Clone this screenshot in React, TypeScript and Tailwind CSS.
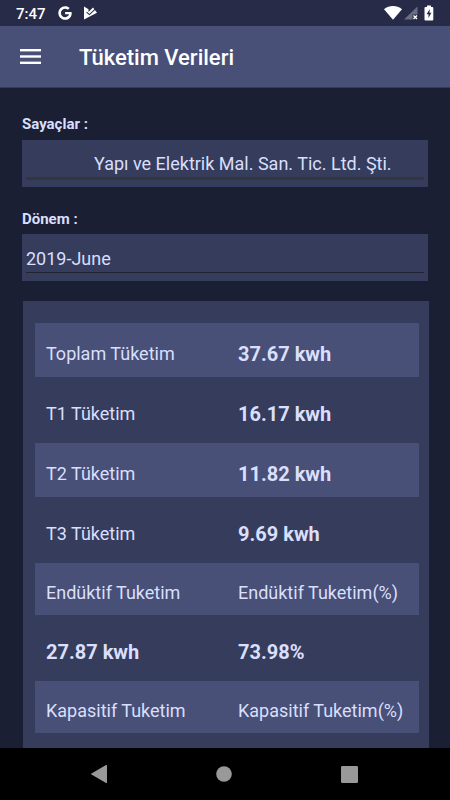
import React from 'react';
import { FaGoogle } from 'react-icons/fa';

interface ReadingRow {
  left: string;
  right: string;
  kind: 'reading' | 'header' | 'values';
}

const rows: ReadingRow[] = [
  { left: 'Toplam Tüketim', right: '37.67 kwh', kind: 'reading' },
  { left: 'T1 Tüketim', right: '16.17 kwh', kind: 'reading' },
  { left: 'T2 Tüketim', right: '11.82 kwh', kind: 'reading' },
  { left: 'T3 Tüketim', right: '9.69 kwh', kind: 'reading' },
  { left: 'Endüktif Tuketim', right: 'Endüktif Tuketim(%)', kind: 'header' },
  { left: '27.87 kwh', right: '73.98%', kind: 'values' },
  { left: 'Kapasitif Tuketim', right: 'Kapasitif Tuketim(%)', kind: 'header' }
];

function StatusBar() {
  return (
    <div className="flex h-[26px] shrink-0 items-center justify-between bg-[#282b48] px-4 text-white">
      <div className="flex items-center">
        <span className="w-[42px] pt-[2px] text-[15px] leading-5 font-medium">7:47</span>
        <FaGoogle className="h-[14px] w-[14px]" />
        {/* Play Protect style check flag */}
        <svg className="ml-3 h-[14px] w-[13px]" viewBox="0 0 13 14">
          <path d="M0 .6 4.500 3.200V6L9 1.500 10.500 3.500 13 6.800 0 13.500z" fill="#fff" />
          <path d="M2.600 6.200 5.400 8.600 11.200 3.200" fill="none" stroke="#282b48" strokeWidth="1.100" />
        </svg>
      </div>
      <div className="flex items-center">
        <svg className="h-[14px] w-[18px]" viewBox="0 0 18 14">
          <path d="M0 3.3C5-1 13-1 18 3.3L9 13.7z" fill="#fff" />
        </svg>
        <svg className="ml-[2px] h-[14px] w-[14px]" viewBox="0 0 14 14">
          <path d="M13.500 .5V8.500H8.500v5H0z" fill="#6b6d82" />
          <path d="M9.500 9.500l3.500 3.500M13 9.500L9.500 13" stroke="#fff" strokeWidth="1.400" />
        </svg>
        <svg className="ml-[6px] h-[16px] w-[10px]" viewBox="0 0 10 16">
          <path d="M3 .5h4V2h1.3q1 0 1 1v11.500q0 1-1 1H1.500q-1 0-1-1V3q0-1 1-1H3z" fill="#fff" />
          <path d="M5.700 4 2.600 9.200H4.500V13L7.400 7.800H5.500z" fill="#282b48" />
        </svg>
      </div>
    </div>
  );
}

function AppBar() {
  return (
    <header className="flex h-[62px] shrink-0 items-center border-b border-[#32395a] bg-[#485078] pl-5 text-white">
      <button type="button" aria-label="Menü" className="mr-[38px]">
        <svg className="h-[15px] w-[21px]" viewBox="0 0 21 15" fill="currentColor">
          <rect y="0" width="21" height="2.4" />
          <rect y="6.300" width="21" height="2.4" />
          <rect y="12.600" width="21" height="2.4" />
        </svg>
      </button>
      <h1 className="pt-[3px] text-[22px] leading-7 font-medium">Tüketim Verileri</h1>
    </header>
  );
}

function SystemNav() {
  return (
    <nav className="flex h-[52px] shrink-0 items-center justify-center gap-[109px] bg-black pr-px text-[#999999]">
      <button type="button" aria-label="Geri">
        <svg className="h-[18px] w-4" viewBox="0 0 16 18" fill="currentColor">
          <path d="M15 0q1-.4 1 .8v16.400q0 1.200-1 .8L.5 9.600Q-.3 9 .5 8.400z" />
        </svg>
      </button>
      <button type="button" aria-label="Ana ekran">
        <svg className="h-4 w-4" viewBox="0 0 16 16" fill="currentColor">
          <circle cx="8" cy="8" r="7.800" />
        </svg>
      </button>
      <button type="button" aria-label="Son uygulamalar">
        <svg className="h-[17px] w-[17px]" viewBox="0 0 17 17" fill="currentColor">
          <rect width="17" height="17" rx="1.200" />
        </svg>
      </button>
    </nav>
  );
}

export default function App() {
  return (
    <div className="flex h-dvh flex-col bg-[#1b1f34] font-[Roboto,sans-serif] text-[#d9dffc]">
      <StatusBar />
      <AppBar />

      <main className="flex min-h-0 flex-1 flex-col overflow-y-auto pt-[26px] pr-[21px] pl-[22px] [scrollbar-width:none]">
        <label htmlFor="meter" className="mb-[6px] text-[15px] leading-5 font-bold">
          Sayaçlar :
        </label>
        <div className="mr-px mb-[22px] h-[47px] shrink-0 bg-[#363d5c] px-1 pt-[7px]">
          <select
            id="meter"
            className="h-[33px] w-full appearance-none border-b-[3px] border-[#34363c] bg-transparent pt-[3px] pl-[68px] text-lg outline-none"
          >
            <option>Yapı ve Elektrik Mal. San. Tic. Ltd. Şti.</option>
          </select>
        </div>

        <label htmlFor="period" className="mb-[5px] text-[15px] leading-5 font-bold">
          Dönem :
        </label>
        <div className="mr-px mb-5 h-[47px] shrink-0 bg-[#363d5c] px-1 pt-[7px]">
          <input
            id="period"
            type="text"
            defaultValue="2019-June"
            className="h-8 w-full border-b border-[#202331] bg-transparent pt-[3px] text-lg outline-none"
          />
        </div>

        {/* Consumption readings */}
        <section className="ml-px flex-1 bg-[#363d5c] pt-4 pr-[10px] pb-4 pl-3">
          <table className="w-full table-fixed border-separate border-spacing-x-0 border-spacing-y-[6px] text-left text-lg leading-6">
            <tbody>
              {rows.map((row, i) => (
                <tr
                  key={row.left}
                  className={`${row.kind === 'header' ? 'h-[52px]' : 'h-[54px]'} ${
                    i % 2 === 0 ? 'bg-[#485078]' : ''
                  }`}
                >
                  <td className={`pt-2 pl-[11px] ${row.kind === 'values' ? 'text-xl leading-6 font-bold' : ''}`}>
                    {row.left}
                  </td>
                  <td className={`pt-2 pl-[11px] ${row.kind === 'header' ? '' : 'text-xl leading-6 font-bold'}`}>
                    {row.right}
                  </td>
                </tr>
              ))}
            </tbody>
          </table>
        </section>
      </main>

      <SystemNav />
    </div>
  );
}
